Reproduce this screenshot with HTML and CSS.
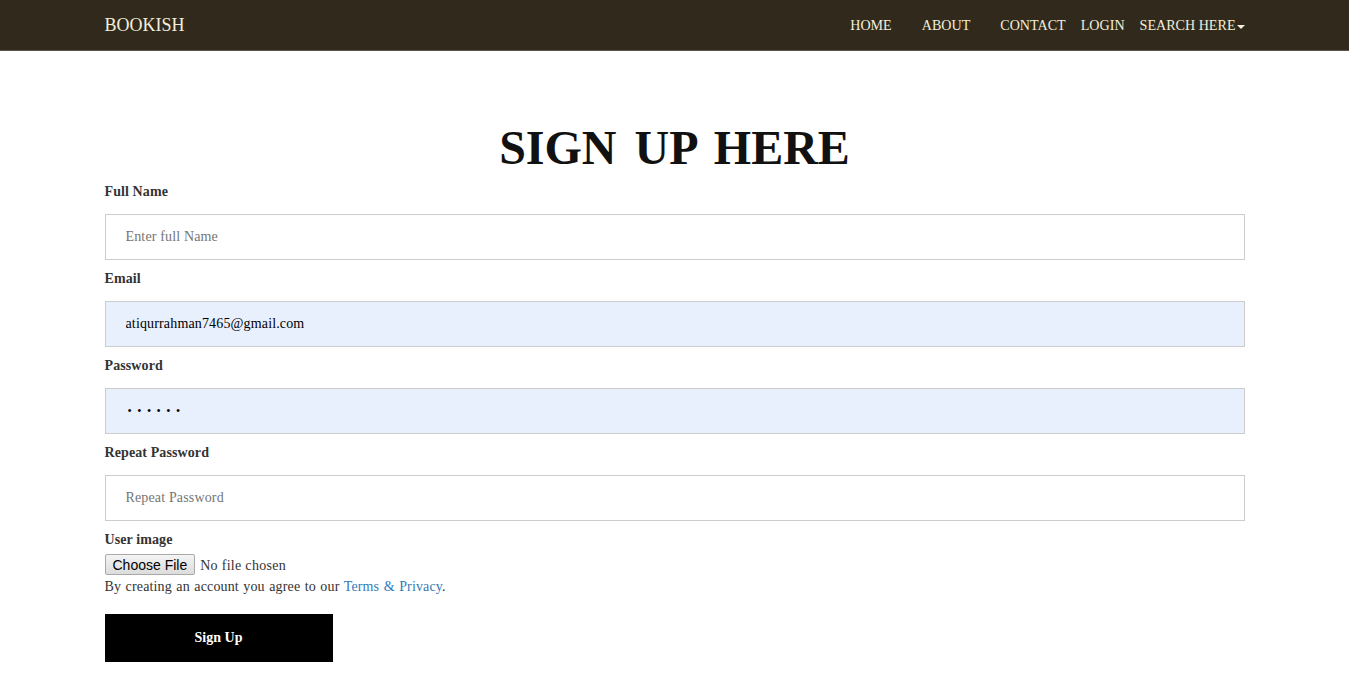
FILE: index.html
```html
<!DOCTYPE html>
<html>
<head>
<meta charset="utf-8">
<title>Bookish - Sign Up</title>
<link rel="stylesheet" href="styles.css">
</head>
<body>
<nav class="navbar">
  <div class="nav-inner">
    <a class="brand" href="#">BOOKISH</a>
    <ul class="nav-links">
      <li class="wide"><a href="#">HOME</a></li>
      <li class="wide"><a href="#">ABOUT</a></li>
      <li class="half"><a href="#">CONTACT</a></li>
      <li><a href="#">LOGIN</a></li>
      <li class="last"><a href="#">SEARCH HERE<span class="caret"></span></a></li>
    </ul>
  </div>
</nav>
<main class="container">
  <h1 class="title">SIGN UP HERE</h1>
  <form class="form">
    <label class="lbl">Full Name</label>
    <input class="field" type="text" placeholder="Enter full Name">
    <label class="lbl">Email</label>
    <input class="field filled" type="text" value="atiqurrahman7465@gmail.com">
    <label class="lbl">Password</label>
    <input class="field filled pw" type="password" value="123456">
    <label class="lbl">Repeat Password</label>
    <input class="field" type="password" placeholder="Repeat Password">
    <label class="lbl">User image</label>
    <input class="file" type="file">
    <p class="terms">By creating an account you agree to our <a href="#">Terms &amp; Privacy</a>.</p>
    <button class="signup" type="button">Sign Up</button>
  </form>
</main>
</body>
</html>
```
FILE: styles.css
```css
* { box-sizing: border-box; }
html, body { margin: 0; padding: 0; }
body {
  font-family: "Liberation Serif", "Times New Roman", serif;
  font-size: 14px;
  line-height: 20px;
  color: #333;
  background: #fff;
}
a { text-decoration: none; }

.navbar {
  background: #312a1c;
  height: 51px;
  border-bottom: 1px solid #5a5546;
}
.nav-inner {
  width: 1170px;
  margin: 0 auto;
  padding: 0 15px;
  display: flex;
  align-items: center;
  justify-content: space-between;
  height: 50px;
}
.brand {
  color: #f3eedb;
  font-size: 18px;
  line-height: 20px;
}
.nav-links {
  list-style: none;
  margin: 0;
  padding: 0;
  display: flex;
  align-items: center;
}
.nav-links li a {
  color: #f3eedb;
  font-size: 14.1px;
  display: block;
  padding: 0 7.5px;
  line-height: 50px;
}
.nav-links li.wide a { padding: 0 15px; }
.nav-links li.half a { padding: 0 7.5px 0 15px; }
.nav-links li.last a { padding-right: 0; }
.caret {
  display: inline-block;
  width: 0;
  height: 0;
  margin-left: 1px;
  vertical-align: middle;
  border-top: 4px solid #f3eedb;
  border-left: 4px solid transparent;
  border-right: 4px solid transparent;
}

.container {
  width: 1170px;
  margin: 0 auto;
  padding: 0 15px;
}
.title {
  text-align: center;
  font-size: 48px;
  line-height: 52px;
  font-weight: bold;
  color: #111;
  word-spacing: 6px;
  margin: 71px 0 8px;
}
.form { display: flex; flex-direction: column; align-items: flex-start; }
.lbl {
  display: block;
  font-weight: bold;
  margin-bottom: 4px;
  line-height: 20px;
  letter-spacing: 0.1px;
}
.field {
  width: 100%;
  height: 46px;
  margin: 8px 0 9px;
  padding: 0 20px;
  border: 1px solid #ccc;
  font-family: "Liberation Serif", "Times New Roman", serif;
  font-size: 14px;
  letter-spacing: 0.15px;
  color: #000;
  background: #fff;
  outline: none;
}
.field::placeholder { color: #757575; }
.field.filled { background: #e8f0fe; }
.field.pw { letter-spacing: 5.5px; padding-left: 22px; font-size: 12px; }
.file {
  font-family: "Liberation Serif", "Times New Roman", serif;
  font-size: 14px;
  letter-spacing: 0.3px;
  color: #333;
  height: 21px;
}
.file::file-selector-button {
  font-family: "Liberation Sans", Arial, sans-serif;
  font-size: 14px;
  letter-spacing: 0;
  color: #000;
  padding: 1px 7px;
  margin-right: 5px;
  height: 21px;
  border: 1px solid #a9a9a9;
  border-radius: 2px;
  background: linear-gradient(#f4f4f4, #dcdcdc);
}
.terms { margin: 2px 0 9px; letter-spacing: 0.15px; word-spacing: 0.8px; }
.terms a { color: #337ab7; }
.signup {
  width: 228px;
  height: 48px;
  margin: 8px 0;
  border: none;
  background: #000;
  color: #fff;
  font-family: "Liberation Serif", "Times New Roman", serif;
  font-size: 14px;
  font-weight: bold;
}
```
